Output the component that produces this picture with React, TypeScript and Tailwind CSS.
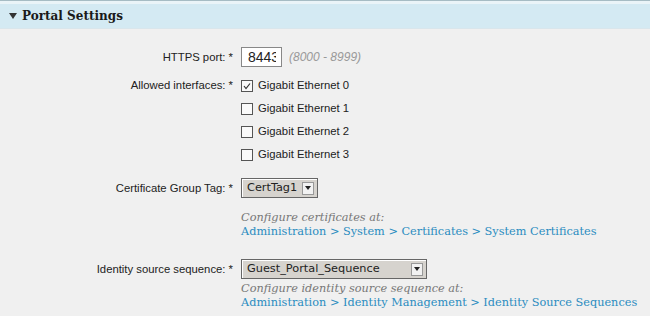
import React from "react";

const Checkbox = ({ checked }: { checked?: boolean }) => (
  <div className="w-[12px] h-[12px] border border-[#555] bg-[#fafafa] flex items-center justify-center">
    {checked && (
      <svg width="10" height="10" viewBox="0 0 10 10">
        <path d="M2 5 L4 7.5 L8 2.5" stroke="#333" strokeWidth="1.2" fill="none" />
      </svg>
    )}
  </div>
);

const Select = ({ text, width }: { text: string; width: string }) => (
  <div
    className={`${width} h-[20px] border border-[#666] bg-[#d6d3ce] flex items-center justify-between pl-[5px] pr-[3px] shadow-[inset_1px_1px_0_#fff]`}
  >
    <span className="text-[11.3px] text-[#222] leading-none" style={{ fontFamily: '"DejaVu Sans", sans-serif' }}>
      {text}
    </span>
    <div className="w-[12px] h-[13px] bg-[#f2f2f2] border border-[#999] flex items-center justify-center">
      <svg width="6" height="4" viewBox="0 0 6 4">
        <path d="M0 0 L6 0 L3 4 Z" fill="#222" />
      </svg>
    </div>
  </div>
);

export default function App() {
  const sans = { fontFamily: '"Liberation Sans", Arial, sans-serif' };
  const serif = { fontFamily: '"DejaVu Serif", serif' };
  return (
    <div className="w-[650px] h-[316px] bg-[#f0f0f0] overflow-hidden">
      <div className="border-t border-[#a6bcc4] bg-[#eaf4f8] pt-[3px]">
        <div className="h-[25px] bg-[#d4eaf3] flex items-center pl-[9px] border-b border-[#d9e6ec]">
          <svg width="8" height="6" viewBox="0 0 8 6" className="mr-[5px]">
            <path d="M0 0 L8 0 L4 6 Z" fill="#333" />
          </svg>
          <span className="text-[12px] font-bold text-[#1a1a1a]" style={serif}>
            Portal Settings
          </span>
        </div>
      </div>

      <div className="grid grid-cols-[233px_1fr] gap-x-[8px] text-[11.3px] text-[#222] mt-[18px]" style={sans}>
        <div className="h-[20px] flex items-center justify-end">HTTPS port: *</div>
        <div className="h-[20px] flex items-center">
          <div className="w-[41px] h-[20px] border border-[#888] bg-white flex items-center pl-[6px]">
            <div className="w-[28px] overflow-hidden whitespace-nowrap text-[14px] text-[#222] leading-none">8443</div>
          </div>
          <span className="ml-[7px] italic text-[#999] text-[12px]">(8000 - 8999)</span>
        </div>

        <div className="h-[23px] mt-[7px] flex items-center justify-end">Allowed interfaces: *</div>
        <div className="mt-[7px] flex flex-col">
          {[0, 1, 2, 3].map((i) => (
            <div key={i} className="h-[23px] flex items-center gap-[5px]">
              <Checkbox checked={i === 0} />
              <span>Gigabit Ethernet {i}</span>
            </div>
          ))}
        </div>

        <div className="h-[20px] mt-[12px] flex items-center justify-end">Certificate Group Tag: *</div>
        <div className="mt-[12px]">
          <Select text="CertTag1" width="w-[77px]" />
          <div className="mt-[13px] leading-[14px] text-[11.3px]" style={serif}>
            <div className="italic text-[#777]">Configure certificates at:</div>
            <div className="text-[#2a8cc0]">Administration &gt; System &gt; Certificates &gt; System Certificates</div>
          </div>
        </div>

        <div className="h-[20px] mt-[20px] flex items-center justify-end">Identity source sequence: *</div>
        <div className="mt-[20px]">
          <Select text="Guest_Portal_Sequence" width="w-[186px]" />
          <div className="mt-[3px] leading-[14px] text-[11.3px]" style={serif}>
            <div className="italic text-[#777]">Configure identity source sequence at:</div>
            <div className="text-[#2a8cc0] whitespace-nowrap">Administration &gt; Identity Management &gt; Identity Source Sequences</div>
          </div>
        </div>
      </div>
    </div>
  );
}
